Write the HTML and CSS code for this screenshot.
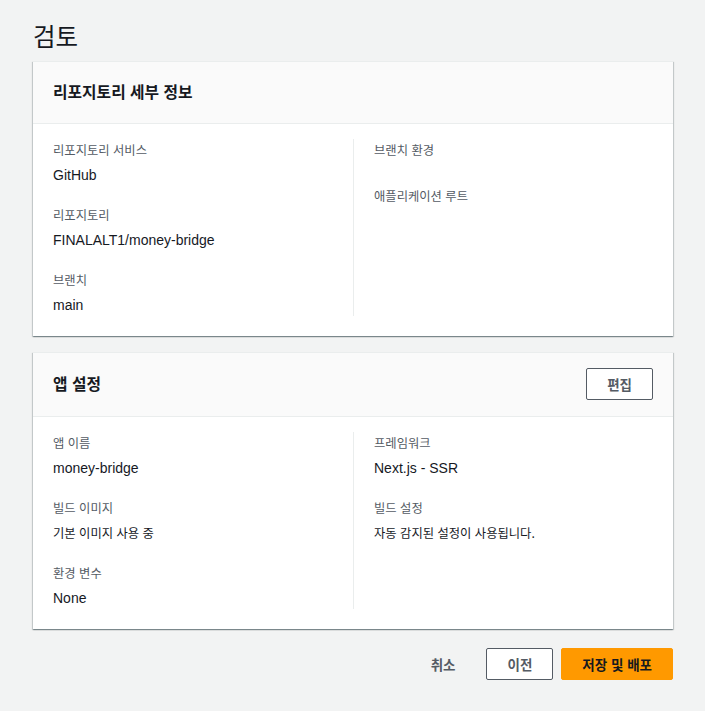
FILE: index.html
```html
<!DOCTYPE html>
<html lang="ko">
<head>
<meta charset="utf-8">
<title>검토</title>
<link rel="stylesheet" href="styles.css">
</head>
<body>
<main class="page">
  <h1 class="page-title">검토</h1>

  <section class="card">
    <header class="card-header">
      <h2 class="card-title">리포지토리 세부 정보</h2>
    </header>
    <div class="card-body">
      <dl class="col">
        <div class="item">
          <dt class="label">리포지토리 서비스</dt>
          <dd class="value">GitHub</dd>
        </div>
        <div class="item">
          <dt class="label">리포지토리</dt>
          <dd class="value">FINALALT1/money-bridge</dd>
        </div>
        <div class="item">
          <dt class="label">브랜치</dt>
          <dd class="value">main</dd>
        </div>
      </dl>
      <dl class="col col-right">
        <div class="item">
          <dt class="label">브랜치 환경</dt>
          <dd class="value empty"></dd>
        </div>
        <div class="item">
          <dt class="label">애플리케이션 루트</dt>
          <dd class="value empty"></dd>
        </div>
      </dl>
    </div>
  </section>

  <section class="card">
    <header class="card-header">
      <h2 class="card-title">앱 설정</h2>
      <button class="btn btn-normal" type="button">편집</button>
    </header>
    <div class="card-body">
      <dl class="col">
        <div class="item">
          <dt class="label">앱 이름</dt>
          <dd class="value">money-bridge</dd>
        </div>
        <div class="item">
          <dt class="label">빌드 이미지</dt>
          <dd class="value ko">기본 이미지 사용 중</dd>
        </div>
        <div class="item">
          <dt class="label">환경 변수</dt>
          <dd class="value">None</dd>
        </div>
      </dl>
      <dl class="col col-right">
        <div class="item">
          <dt class="label">프레임워크</dt>
          <dd class="value">Next.js - SSR</dd>
        </div>
        <div class="item">
          <dt class="label">빌드 설정</dt>
          <dd class="value ko">자동 감지된 설정이 사용됩니다.</dd>
        </div>
      </dl>
    </div>
  </section>

  <footer class="actions">
    <button class="btn btn-link" type="button">취소</button>
    <button class="btn btn-normal" type="button">이전</button>
    <button class="btn btn-primary" type="button">저장 및 배포</button>
  </footer>
</main>
</body>
</html>
```

FILE: styles.css
```css
* {
  box-sizing: border-box;
}

html, body {
  margin: 0;
  padding: 0;
  background: #f2f3f3;
}

body {
  font-family: "Liberation Sans", "Noto Sans CJK KR", sans-serif;
  font-size: 14px;
  color: #16191f;
}

.page {
  padding: 18px 32px 20px 33px;
}

.page-title {
  margin: 0 0 7px 0;
  font-family: "Noto Sans CJK KR", sans-serif;
  font-size: 24.5px;
  font-weight: 400;
  line-height: 36px;
  color: #16191f;
}

.card {
  background: #ffffff;
  border-top: 1px solid #eaeded;
  box-shadow: 0 1px 1px 0 rgba(0, 28, 36, 0.3), 1px 1px 1px 0 rgba(0, 28, 36, 0.15), -1px 1px 1px 0 rgba(0, 28, 36, 0.15);
  margin-bottom: 16px;
}

.card-header {
  display: flex;
  align-items: center;
  justify-content: space-between;
  background: #fafafa;
  border-bottom: 1px solid #eaeded;
  padding: 15px 20px 16px 20px;
  min-height: 62px;
}

.card-title {
  margin: 0;
  font-family: "Noto Sans CJK KR", sans-serif;
  font-size: 15.8px;
  font-weight: 700;
  line-height: 30px;
  color: #16191f;
}

.card-body {
  display: grid;
  grid-template-columns: 1fr 1fr;
  padding: 15px 20px 20px 20px;
}

.col {
  margin: 0;
  display: flex;
  flex-direction: column;
  gap: 18px;
}

.col-right {
  border-left: 1px solid #eaeded;
  padding-left: 20px;
}

.item {
  display: flex;
  flex-direction: column;
}

.label {
  font-family: "Noto Sans CJK KR", sans-serif;
  font-size: 12.3px;
  line-height: 22px;
  color: #545b64;
}

.value {
  margin: 3px 0 0 0;
  font-size: 14px;
  line-height: 22px;
  color: #16191f;
}

.value.ko {
  font-family: "Noto Sans CJK KR", sans-serif;
  font-size: 12.3px;
}

.value.empty {
  height: 3px;
}

.btn {
  height: 32px;
  padding: 0 20px;
  border: 1px solid transparent;
  border-radius: 2px;
  font-family: "Noto Sans CJK KR", sans-serif;
  font-size: 13.5px;
  font-weight: 700;
  line-height: 30px;
  cursor: pointer;
}

.btn-normal {
  background: #ffffff;
  border-color: #545b64;
  color: #545b64;
}

.btn-primary {
  background: #ff9900;
  border-color: #ff9900;
  color: #16191f;
}

.btn-link {
  background: transparent;
  color: #545b64;
  margin-right: 2px;
}

.actions {
  display: flex;
  justify-content: flex-end;
  align-items: center;
  gap: 8px;
  margin-top: 19px;
}
```
